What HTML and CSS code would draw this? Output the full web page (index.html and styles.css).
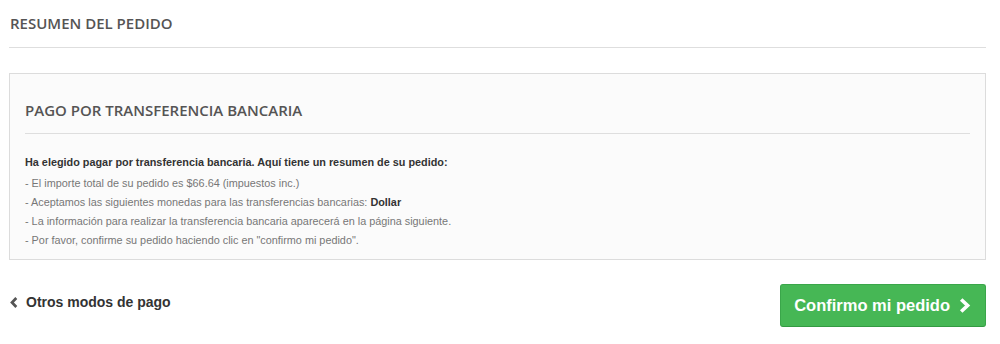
FILE: index.html
```html
<!DOCTYPE html>
<html lang="es">
<head>
<meta charset="utf-8">
<title>Resumen del pedido</title>
<link rel="stylesheet" href="styles.css">
</head>
<body>
<div class="page">
  <h1 class="page-heading">Resumen del pedido</h1>
  <div class="box">
    <h3 class="page-subheading">Pago por transferencia bancaria</h3>
    <p class="intro"><strong>Ha elegido pagar por transferencia bancaria. Aquí tiene un resumen de su pedido:</strong></p>
    <p class="lines">
      - El importe total de su pedido es $66.64 (impuestos inc.)<br>
      - Aceptamos las siguientes monedas para las transferencias bancarias: <b>Dollar</b><br>
      - La información para realizar la transferencia bancaria aparecerá en la página siguiente.<br>
      - Por favor, confirme su pedido haciendo clic en "confirmo mi pedido".
    </p>
  </div>
  <div class="actions">
    <a class="back" href="#"><svg class="chev-left" width="8" height="11" viewBox="0 0 8 11"><path d="M6.3 1 L2 5.5 L6.3 10" fill="none" stroke="#555" stroke-width="2.7"/></svg>Otros modos de pago</a>
    <button class="confirm" type="button">Confirmo mi pedido<svg class="chev-right" width="12" height="15" viewBox="0 0 12 15"><path d="M2.2 1.5 L8.6 7.5 L2.2 13.5" fill="none" stroke="#fff" stroke-width="3.6"/></svg></button>
  </div>
</div>
</body>
</html>
```
FILE: styles.css
```css
* { box-sizing: border-box; }
body {
  margin: 0;
  font-family: "Liberation Sans", Arial, sans-serif;
  font-size: 10.85px;
  color: #777;
  background: #fff;
}
.page {
  padding: 0 14px 0 9px;
}
.page-heading {
  font-family: "Open Sans", sans-serif;
  font-weight: 600;
  font-size: 15px;
  line-height: 20px;
  color: #555454;
  text-transform: uppercase;
  margin: 0;
  padding: 13px 0 14px 1px;
  border-bottom: 1px solid #dedede;
}
.box {
  margin-top: 25px;
  background: #fbfbfb;
  border: 1px solid #dcdcdc;
  padding: 26px 15px 9px 15px;
}
.page-subheading {
  font-family: "Open Sans", sans-serif;
  font-weight: 600;
  font-size: 15px;
  line-height: 20px;
  color: #555454;
  text-transform: uppercase;
  margin: 0;
  padding: 0 0 13px;
  border-bottom: 1px solid #dedede;
}
.intro {
  margin: 21px 0 4px;
  color: #333;
  line-height: 15px;
}
.lines {
  margin: 0;
  line-height: 19px;
}
.lines b { color: #333; }
.actions {
  display: flex;
  justify-content: space-between;
  align-items: flex-start;
  margin-top: 24px;
}
.back {
  display: flex;
  align-items: center;
  gap: 8px;
  margin: 10px 0 0 1px;
  font-weight: bold;
  font-size: 14px;
  line-height: 17px;
  color: #333;
  text-decoration: none;
}
.chev-left { margin-top: -1px; }
.confirm {
  display: flex;
  align-items: center;
  gap: 9px;
  font-family: "Liberation Sans", Arial, sans-serif;
  font-weight: bold;
  font-size: 16.5px;
  color: #fff;
  background: #46b755;
  border: 1px solid #3aa64a;
  border-bottom-color: #339a42;
  border-radius: 3px;
  height: 43px;
  padding: 0 14px 0 13px;
}
```
